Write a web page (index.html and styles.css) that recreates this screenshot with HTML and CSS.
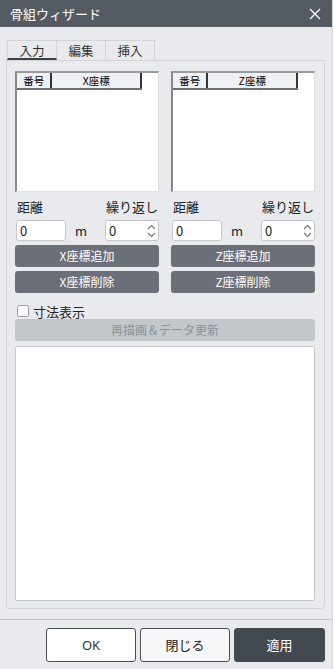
FILE: index.html
```html
<!DOCTYPE html>
<html lang="ja">
<head>
    <meta charset="UTF-8">
    <meta name="viewport" content="width=device-width, initial-scale=1.0">
    <title>骨組ウィザード</title>
    <link rel="stylesheet" href="styles.css">
</head>
<body>
    <div class="window">
        <div class="titlebar">
            <span class="title">骨組ウィザード</span>
            <svg class="close" width="12" height="12" viewBox="0 0 12 12">
                <path d="M1 1 L11 11 M11 1 L1 11" stroke="#fff" stroke-width="1.3" fill="none"/>
            </svg>
        </div>

        <div class="main">
            <div class="tabs">
                <div class="tab active">入力</div>
                <div class="tab">編集</div>
                <div class="tab">挿入</div>
            </div>

            <div class="panel">
                <div class="columns">
                    <div class="column">
                        <div class="list">
                            <div class="list-head">
                                <div class="cell num">番号</div>
                                <div class="cell coord">X座標</div>
                            </div>
                        </div>
                        <div class="labels">
                            <span>距離</span>
                            <span>繰り返し</span>
                        </div>
                        <div class="inputs">
                            <div class="field">0</div>
                            <span class="unit">m</span>
                            <div class="spin">
                                <span>0</span>
                                <svg width="9" height="16" viewBox="0 0 9 16">
                                    <path d="M1 6 L4.5 2.5 L8 6 M1 10 L4.5 13.5 L8 10" stroke="#777" stroke-width="1.2" fill="none"/>
                                </svg>
                            </div>
                        </div>
                        <div class="btn">X座標追加</div>
                        <div class="btn">X座標削除</div>
                    </div>

                    <div class="column">
                        <div class="list">
                            <div class="list-head">
                                <div class="cell num">番号</div>
                                <div class="cell coord">Z座標</div>
                            </div>
                        </div>
                        <div class="labels">
                            <span>距離</span>
                            <span>繰り返し</span>
                        </div>
                        <div class="inputs">
                            <div class="field">0</div>
                            <span class="unit">m</span>
                            <div class="spin">
                                <span>0</span>
                                <svg width="9" height="16" viewBox="0 0 9 16">
                                    <path d="M1 6 L4.5 2.5 L8 6 M1 10 L4.5 13.5 L8 10" stroke="#777" stroke-width="1.2" fill="none"/>
                                </svg>
                            </div>
                        </div>
                        <div class="btn">Z座標追加</div>
                        <div class="btn">Z座標削除</div>
                    </div>
                </div>

                <label class="check">
                    <span class="box"></span>
                    寸法表示
                </label>

                <div class="btn disabled">再描画＆データ更新</div>

                <div class="output"></div>
            </div>
        </div>

        <div class="footer">
            <div class="fbtn ok">OK</div>
            <div class="fbtn close-btn">閉じる</div>
            <div class="fbtn apply">適用</div>
        </div>
    </div>
</body>
</html>
```

FILE: styles.css
```css
body {
    margin: 0;
    padding: 0;
    background-color: #e9eaed;
    font-family: "Noto Sans CJK JP", "Noto Sans", sans-serif;
    color: #222;
}

.window {
    width: 332px;
    height: 669px;
    border-right: 1px solid #d4d6da;
    display: flex;
    flex-direction: column;
    background-color: #e9eaed;
}

.titlebar {
    height: 27px;
    background-color: #545a62;
    display: flex;
    align-items: center;
    justify-content: space-between;
    padding: 0 10px 0 10px;
    flex-shrink: 0;
}

.title {
    color: #fff;
    font-size: 13px;
}

.close {
    margin-right: 1px;
}

.main {
    padding: 13px 7px 0 6px;
}

.tabs {
    display: flex;
    padding-left: 1px;
}

.tab {
    width: 48px;
    height: 19px;
    border: 1px solid #d2d4d8;
    border-bottom: none;
    border-left: none;
    font-size: 12.5px;
    line-height: 19px;
    text-align: center;
    color: #333;
}

.tab:first-child {
    border-left: 1px solid #d2d4d8;
}

.tab.active {
    border-bottom: 2px solid #3b4046;
    height: 17px;
    line-height: 19px;
}

.panel {
    border: 1px solid #d2d4d8;
    border-radius: 0 0 4px 4px;
    padding: 10px 9px 7px 8px;
}

.columns {
    display: flex;
    gap: 12px;
}

.column {
    width: 144px;
}

.list {
    height: 118px;
    background-color: #fff;
    border-left: 2px solid #888;
    border-top: 2px solid #999;
    border-right: 1px solid #e0e0e0;
    border-bottom: 1px solid #e0e0e0;
}

.list-head {
    display: flex;
    height: 15px;
    border-bottom: 2px solid #6e6e6e;
    width: 125px;
    background-color: #eff0f4;
}

.cell {
    font-size: 10.5px;
    line-height: 15px;
    text-align: center;
    color: #000;
    border-right: 2px solid #333;
}

.cell.num {
    width: 34px;
}

.cell.coord {
    width: 89px;
}

.labels {
    display: flex;
    justify-content: space-between;
    font-size: 13px;
    padding: 6px 1px 0 2px;
    height: 18px;
    line-height: 18px;
}

.inputs {
    display: flex;
    align-items: center;
    margin-top: 4px;
}

.field {
    width: 45px;
    height: 19px;
    background-color: #fff;
    border: 1px solid #c6c8cc;
    border-radius: 3px;
    margin-left: 1px;
    padding-left: 3px;
    font-size: 13px;
    line-height: 19px;
}

.unit {
    font-size: 13px;
    margin-left: 9px;
    width: 23px;
}

.spin {
    width: 47px;
    height: 19px;
    background-color: #fff;
    border: 1px solid #c6c8cc;
    border-radius: 3px;
    display: flex;
    align-items: center;
    justify-content: space-between;
    padding: 0 2px 0 3px;
    font-size: 13px;
    margin-left: auto;
}

.btn {
    height: 22px;
    margin-top: 4px;
    background-color: #6b7078;
    border-radius: 3px;
    color: #fff;
    font-size: 12px;
    line-height: 22px;
    text-align: center;
}

.check {
    display: flex;
    align-items: center;
    gap: 4px;
    font-size: 13px;
    margin-top: 10px;
    padding-left: 2px;
    height: 16px;
}

.box {
    width: 10px;
    height: 10px;
    background-color: #fff;
    border: 1px solid #9ea2a7;
    border-radius: 2px;
}

.btn.disabled {
    background-color: #c2c7cc;
    color: #8c9196;
    margin-top: 0;
}

.output {
    height: 253px;
    margin-top: 5px;
    background-color: #fff;
    border: 1px solid #c6c8cc;
    border-radius: 2px;
}

.footer {
    margin-top: 10px;
    border-top: 1px solid #c6c8cc;
    display: flex;
    justify-content: flex-end;
    gap: 4px;
    padding: 8px 7px 0 0;
}

.fbtn {
    width: 88px;
    height: 32px;
    border: 1px solid #4a4f55;
    border-radius: 3px;
    font-size: 13px;
    line-height: 32px;
    text-align: center;
    font-family: "Noto Sans", "Noto Sans CJK JP", sans-serif;
}

.fbtn.ok {
    background-color: #fff;
    color: #333;
}

.fbtn.close-btn {
    background-color: #f6f7f9;
    color: #222;
}

.fbtn.apply {
    width: 89px;
    background-color: #434950;
    border-color: #434950;
    color: #fff;
}
```
